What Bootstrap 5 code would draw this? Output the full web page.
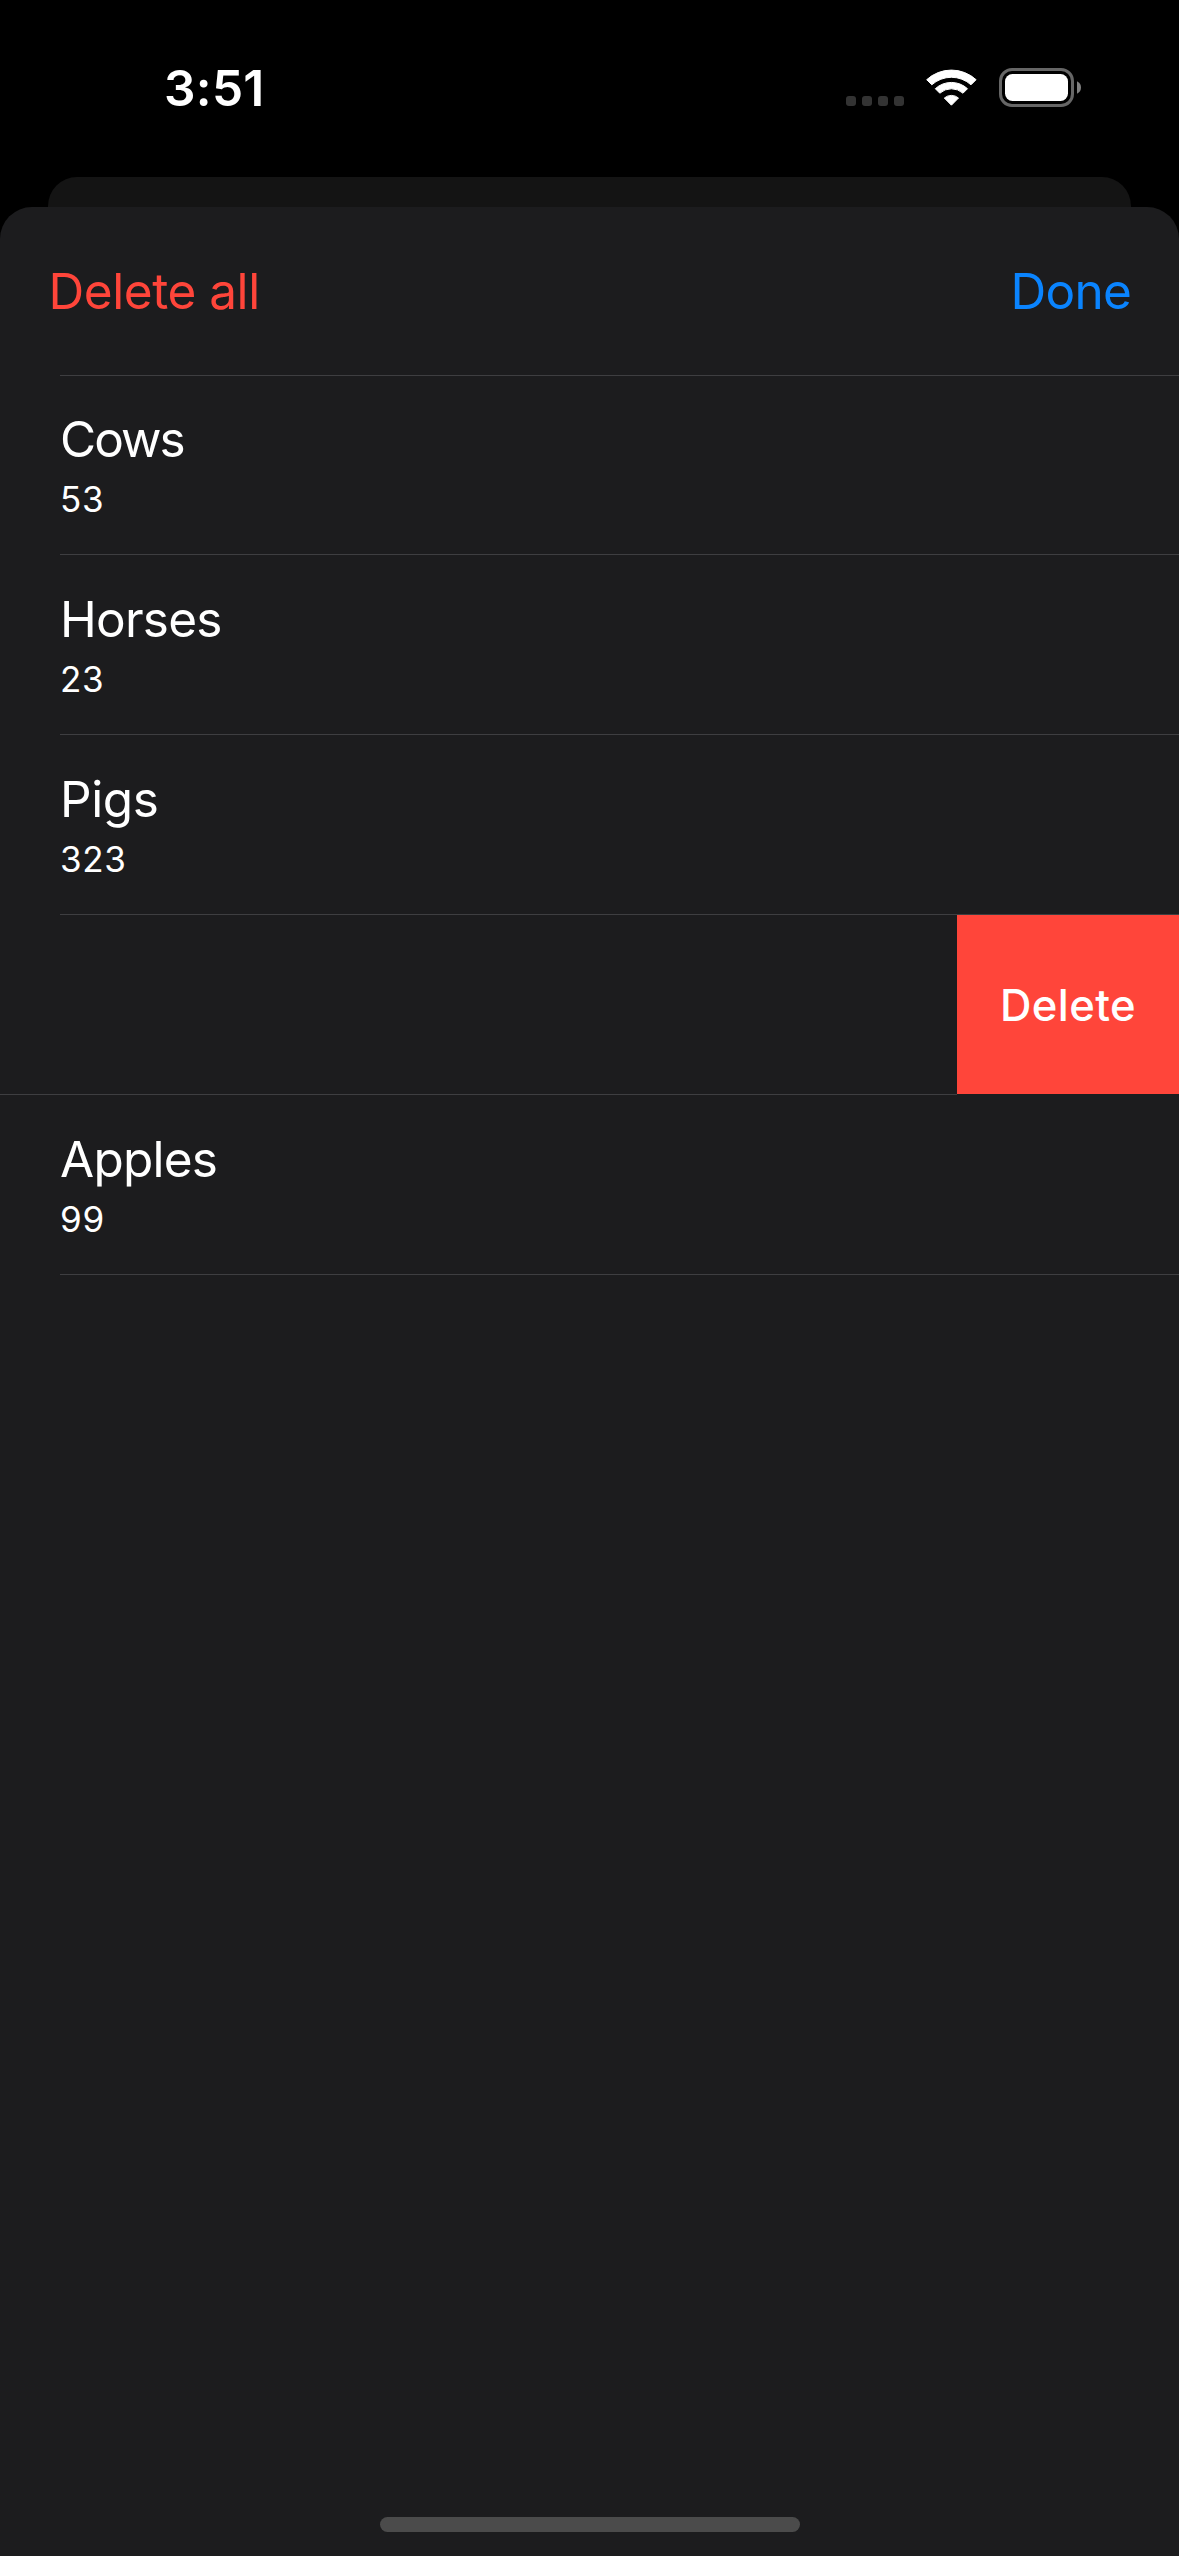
<!DOCTYPE html>
<html lang="en" data-bs-theme="dark">
<head>
<meta charset="utf-8">
<meta name="viewport" content="width=device-width, initial-scale=1">
<title>Counters</title>
<link href="https://cdn.jsdelivr.net/npm/bootstrap@5.3.0/dist/css/bootstrap.min.css" rel="stylesheet">
<style>
  :root { --sheet: #1c1c1e; --line: #3e3e41; --danger: #ff453a; --link: #0a84ff; }
  body { background: #000; font-family: Inter, "Liberation Sans", sans-serif; color: #fff; font-size: 49.5px; line-height: 60px; }
  .screen { width: 1179px; height: 2556px; }
  .status { height: 177px; padding: 58px 98px 0 164px; }
  .clock { font-weight: 600; letter-spacing: .3px; }
  .status-icons { height: 39px; margin-top: 10px; }
  .under-sheet { height: 30px; margin: 0 48px; background: #141414; border-radius: 29px 29px 0 0; }
  .sheet { background: var(--sheet); border-radius: 32px 32px 0 0; }
  .sheet-bar { height: 168px; padding: 54px 48px 0; }
  .bar-btn { font-size: inherit; line-height: inherit; border: 0; padding: 0; text-decoration: none; }
  .bar-btn.wipe { color: var(--danger); letter-spacing: -.45px; padding-left: .5px; }
  .bar-btn.finish { color: var(--link); letter-spacing: -.75px; }
  .counters { --bs-list-group-bg: transparent; --bs-list-group-color: #fff; border-radius: 0; }
  .counters .counter { height: 180px; padding: 34px 0 0; margin-left: 60px; border: 0; border-bottom: 1px solid var(--line); border-radius: 0; letter-spacing: -.75px; }
  .counters .counter:first-child { border-top: 1px solid var(--line); padding-top: 33px; }
  .counter .value { font-size: 35px; line-height: 42px; margin-top: 9px; letter-spacing: .7px; }
  .counter .tight { letter-spacing: -2px; }
  .counter .loose { letter-spacing: -.4px; }
  .counters .swiped { margin-left: 0; padding: 0; border: 0; }
  .swiped .rest { border-bottom: 1px solid var(--line); }
  .swipe-action { width: 222px; height: 179px; background: var(--danger); color: #fff; border: 0; border-radius: 0; font-size: 43.6px; line-height: 53px; font-weight: 500; letter-spacing: .4px; padding: 2px 0 0; }
  .home-bar { width: 420px; height: 15px; border-radius: 8px; background: #4b4b4b; margin-bottom: 24px; }
</style>
</head>
<body>
<div class="screen d-flex flex-column overflow-hidden">
  <header class="status d-flex justify-content-between align-items-start flex-shrink-0">
    <span class="clock">3:51</span>
    <div class="status-icons d-flex align-items-start">
      <svg width="235" height="39" viewBox="846 68 235 39" aria-hidden="true">
        <g fill="#333">
          <rect x="846" y="96" width="10" height="10" rx="3"/>
          <rect x="862" y="96" width="10" height="10" rx="3"/>
          <rect x="878" y="96" width="10" height="10" rx="3"/>
          <rect x="894" y="96" width="10" height="10" rx="3"/>
        </g>
        <g transform="translate(951.4 106)" fill="#fff" stroke="#fff" stroke-width="1" stroke-linejoin="round">
          <path d="M-24.7-26.3A36.5 36.5 0 0 1 24.7-26.3L19.6-21.2A29.3 29.3 0 0 0-19.6-21.2Z"/>
          <path d="M-16.1-17.3A23.8 23.8 0 0 1 16.1-17.3L11.6-12.8A17.4 17.4 0 0 0-11.6-12.8Z"/>
          <path d="M-7.1-8A11 11 0 0 1 7.1-8L0-.8Z"/>
        </g>
        <rect x="1000.5" y="69.5" width="72" height="36" rx="11.5" fill="none" stroke="#666" stroke-width="3"/>
        <rect x="1005" y="74" width="63" height="27" rx="7.5" fill="#fff"/>
        <path d="M1077 81.3Q1081 83.3 1081 87.5T1077 93.7Z" fill="#808080"/>
      </svg>
    </div>
  </header>
  <div class="under-sheet flex-shrink-0"></div>
  <main class="sheet d-flex flex-column flex-grow-1">
    <div class="sheet-bar d-flex justify-content-between align-items-start">
      <button type="button" class="btn bar-btn wipe">Delete all</button>
      <button type="button" class="btn bar-btn finish">Done</button>
    </div>
    <div class="list-group counters">
      <div class="list-group-item counter"><div class="tight">Cows</div><div class="value">53</div></div>
      <div class="list-group-item counter"><div>Horses</div><div class="value">23</div></div>
      <div class="list-group-item counter"><div class="loose">Pigs</div><div class="value">323</div></div>
      <div class="list-group-item counter swiped d-flex">
        <div class="rest flex-grow-1"></div>
        <button type="button" class="btn swipe-action">Delete</button>
      </div>
      <div class="list-group-item counter"><div>Apples</div><div class="value">99</div></div>
    </div>
    <div class="home-bar mt-auto mx-auto"></div>
  </main>
</div>
<script src="https://cdn.jsdelivr.net/npm/bootstrap@5.3.0/dist/js/bootstrap.bundle.min.js"></script>
</body>
</html>
